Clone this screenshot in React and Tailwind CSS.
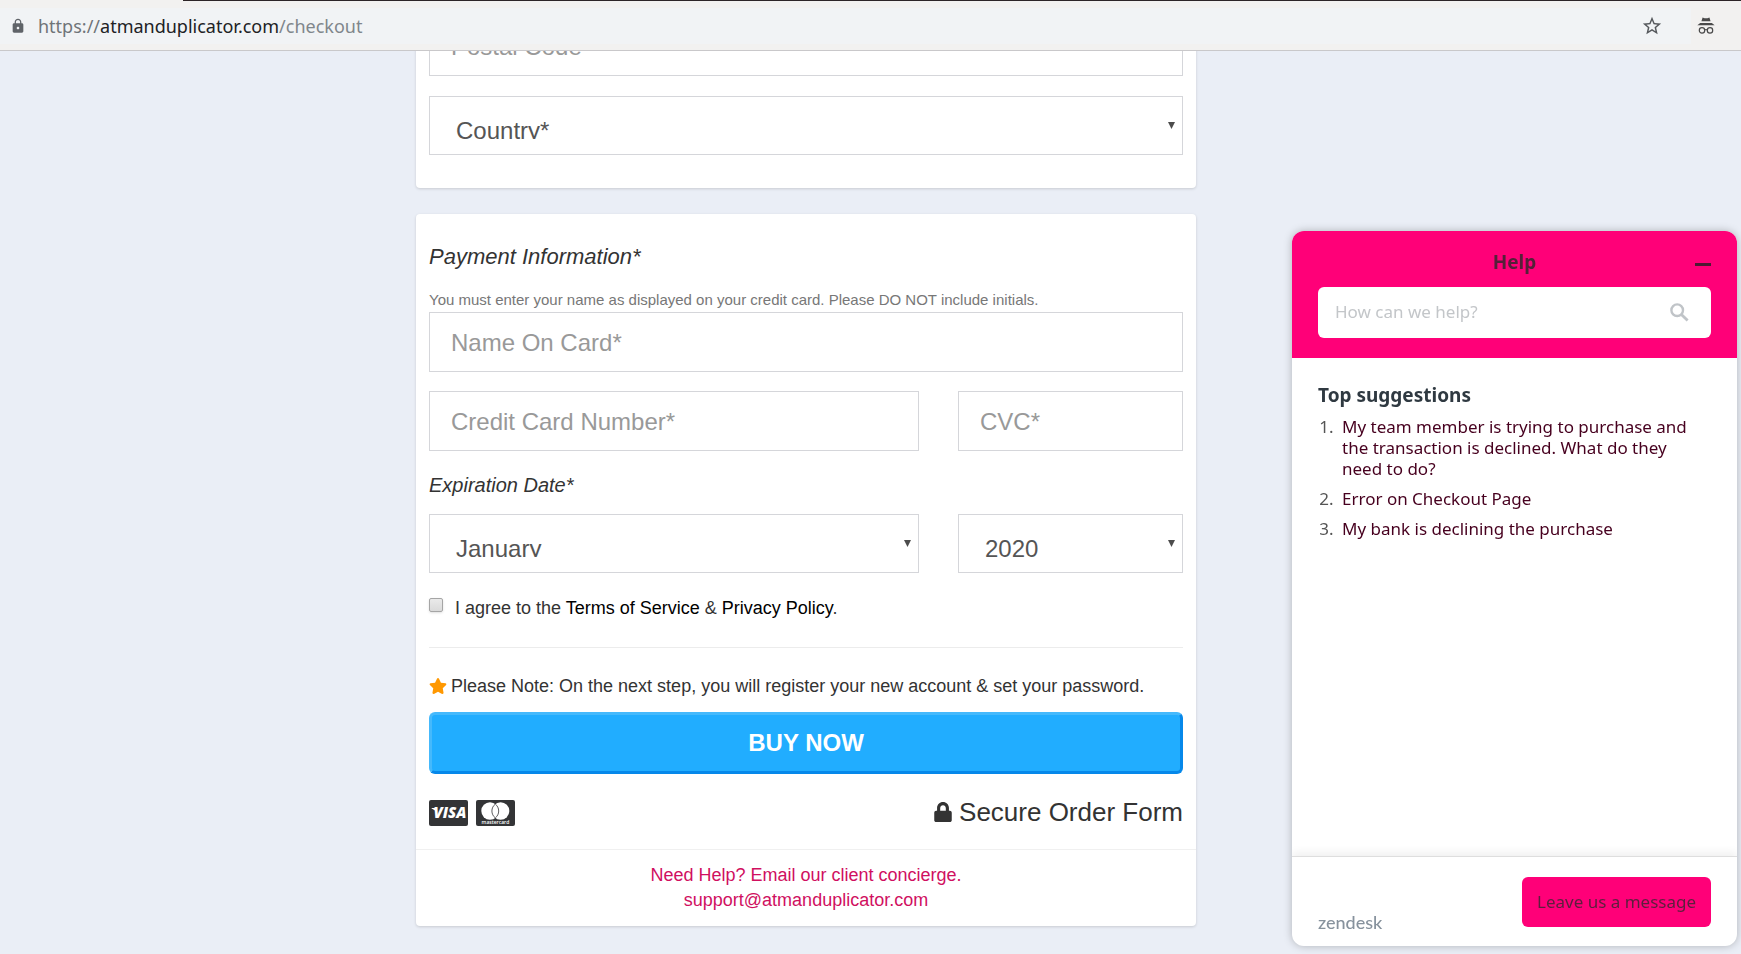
import { FaLock, FaStar } from 'react-icons/fa';
import { MdLock, MdStarBorder } from 'react-icons/md';

const suggestions = [
  'My team member is trying to purchase and the transaction is declined. What do they need to do?',
  'Error on Checkout Page',
  'My bank is declining the purchase',
];

const months = ['January', 'February', 'March', 'April', 'May', 'June', 'July', 'August', 'September', 'October', 'November', 'December'];
const years = ['2020', '2021', '2022', '2023', '2024', '2025'];

function IncognitoIcon() {
  return (
    <svg width="18" height="18" viewBox="0 0 18 18" className="text-[#4a4a4a]" aria-hidden="true">
      <path d="M5.6 0.6 L7.6 1.2 H10.4 L12.4 0.6 L13.6 4.2 H4.4 Z" fill="currentColor" />
      <path d="M3.2 6 H14.8 L17.6 8.2 H0.4 Z" fill="currentColor" />
      <circle cx="5" cy="13.4" r="2.7" fill="none" stroke="currentColor" strokeWidth="1.2" />
      <circle cx="13" cy="13.4" r="2.7" fill="none" stroke="currentColor" strokeWidth="1.2" />
      <path d="M7.6 13 Q9 12 10.4 13" fill="none" stroke="currentColor" strokeWidth="1.1" />
    </svg>
  );
}

function SearchIcon() {
  return (
    <svg width="19" height="19" viewBox="0 0 19 19" fill="none" stroke="currentColor" className="mr-0.5 text-[#c0c4c8]" aria-hidden="true">
      <circle cx="7.2" cy="7.2" r="5.8" strokeWidth="2.4" />
      <path d="M11.4 11.4 L17.6 17.6" strokeWidth="2.8" />
    </svg>
  );
}

function VisaIcon() {
  return (
    <svg width="39" height="26" viewBox="0 0 39 26" role="img" aria-label="Visa">
      <rect width="39" height="26" rx="2" fill="#333436" />
      <path d="M2.6 8 H6.8 L8 13 Q6 9.6 2.6 8.4 Z" fill="#fff" />
      <text x="4.5" y="18.4" fill="#fff" fontFamily="Open Sans, sans-serif" fontSize="15" fontWeight="800" fontStyle="italic">
        VISA
      </text>
    </svg>
  );
}

function MastercardIcon() {
  return (
    <svg width="39" height="26" viewBox="0 0 39 26" role="img" aria-label="Mastercard">
      <rect width="39" height="26" rx="2" fill="#333436" />
      <circle cx="14" cy="11" r="8.7" fill="#fff" />
      <circle cx="24.6" cy="11" r="8.7" fill="#fff" />
      <path d="M19.3 4.1 A8.7 8.7 0 0 1 19.3 17.9 A8.7 8.7 0 0 1 19.3 4.1 Z" fill="#fff" stroke="#333436" strokeWidth="0.8" />
      <text x="19.5" y="23.8" fill="#fff" textAnchor="middle" fontFamily="Open Sans, sans-serif" fontSize="5" fontWeight="600">
        mastercard
      </text>
    </svg>
  );
}

function TextField({ label }) {
  return (
    <input
      type="text"
      aria-label={label}
      placeholder={label}
      className="block h-15 w-full min-w-0 border border-[#d5d6da] bg-white px-[21px] pt-0.5 text-2xl text-[#555] placeholder:text-[#999] placeholder:opacity-100"
    />
  );
}

function SelectField({ label, options }) {
  return (
    <div className="relative min-w-0">
      <select
        aria-label={label}
        className="block h-[59px] w-full appearance-none border border-[#d5d6da] bg-white pt-5 pr-8 pb-[15px] pl-[26px] text-2xl leading-7 text-[#555]"
      >
        {options.map((option) => (
          <option key={option}>{option}</option>
        ))}
      </select>
      <svg width="7" height="7" viewBox="0 0 7 7" className="pointer-events-none absolute top-[26px] right-2 text-[#4c4c4c]" aria-hidden="true">
        <path d="M0 0 H7 L3.5 7 Z" fill="currentColor" />
      </svg>
    </div>
  );
}

function AddressBar() {
  return (
    <header className="relative z-10 flex h-[51px] items-center border-b border-[#c9c8ca] bg-[#f2f1f0] pt-0.5">
      <div className="absolute top-0 right-0 left-[183px] h-px bg-[#2c2427]" />
      <div className="flex h-9 flex-1 items-center bg-[#f1f3f5] pr-7 pl-2.5">
        <MdLock className="mr-3 size-4 text-[#5f6368]" />
        <div className="flex-1 font-['Noto_Sans',sans-serif] text-lg text-[#6f7478]">
          https://<span className="text-[#202124]">atmanduplicator.com</span>
          <span className="text-[#80868b]">/checkout</span>
        </div>
        <button type="button" aria-label="Bookmark this page">
          <MdStarBorder className="size-[22px] text-[#55585c]" />
        </button>
      </div>
      <div className="pr-[26px] pl-1.5">
        <IncognitoIcon />
      </div>
    </header>
  );
}

function PaymentForm() {
  return (
    <form className="rounded bg-white pt-[31px] shadow-[0_1px_3px_rgba(0,0,0,0.15)]">
      <div className="px-[13px]">
        <h2 className="text-[22px] leading-6 text-[#333] italic">Payment Information*</h2>
        <p className="mt-[19px] text-[15px] leading-6 text-[#777]">
          You must enter your name as displayed on your credit card. Please DO NOT include initials.
        </p>
        <TextField label="Name On Card*" />
        <div className="mt-[19px] grid grid-cols-[490fr_225fr] gap-[39px]">
          <TextField label="Credit Card Number*" />
          <TextField label="CVC*" />
        </div>
        <h3 className="mt-[22px] text-[20px] leading-6 text-[#333] italic">Expiration Date*</h3>
        <div className="mt-[17px] grid grid-cols-[490fr_225fr] gap-[39px]">
          <SelectField label="Expiration month" options={months} />
          <SelectField label="Expiration year" options={years} />
        </div>
        <div className="mt-[23px] flex items-start text-lg leading-6 text-[#333]">
          <input
            id="agree"
            type="checkbox"
            className="mt-0.5 mr-3 size-3.5 appearance-none rounded-xs border border-[#a5a5a5] bg-linear-to-b from-[#eaeaea] to-[#dadada] shadow-sm"
          />
          <label htmlFor="agree">
            I agree to the <a href="#terms" className="text-black">Terms of Service</a> &amp;{' '}
            <a href="#privacy" className="text-black">Privacy Policy</a>.
          </label>
        </div>
        <hr className="mt-[27px] border-[#ececec]" />
        <p className="mt-[26px] flex items-center gap-1 text-lg leading-6 text-[#333]">
          <FaStar className="size-[18px] text-[#ff9800]" />
          Please Note: On the next step, you will register your new account &amp; set your password.
        </p>
        <button
          type="submit"
          className="mt-3.5 block h-[62px] w-full rounded-md border-3 border-t-[#45b9fc] border-r-[#0688ea] border-b-[#0688ea] border-l-[#45b9fc] bg-[#21adff] text-2xl font-bold text-white"
        >
          BUY NOW
        </button>
        <div className="mt-[26px] flex h-[26px] items-center justify-between text-[#333]">
          <div className="flex gap-2">
            <VisaIcon />
            <MastercardIcon />
          </div>
          <div className="flex items-center gap-1.5 pb-0.5 text-[26px]">
            <FaLock className="size-5" />
            Secure Order Form
          </div>
        </div>
      </div>
      <div className="mt-[23px] border-t border-[#f0f0f0] py-[13px] text-center text-lg leading-[25px] text-[#d0105f]">
        <p>Need Help? Email our client concierge.</p>
        <a href="mailto:support@atmanduplicator.com">support@atmanduplicator.com</a>
      </div>
    </form>
  );
}

function HelpWidget() {
  return (
    <aside className="fixed right-1 bottom-2 flex h-[715px] w-[445px] flex-col overflow-hidden rounded-xl bg-white font-['Noto_Sans',sans-serif] text-[17px] shadow-[0_0_8px_rgba(0,0,0,0.25)]">
      <div className="bg-[#ff0078] px-[26px] pt-[19px] pb-5">
        <div className="relative flex h-6 items-center justify-center">
          <h2 className="text-[19px] font-bold text-[#542039]">Help</h2>
          <button type="button" aria-label="Minimize" className="absolute right-0 flex h-6 w-4 items-center pt-1">
            <span className="h-[3px] w-full bg-[#4c1a33]" />
          </button>
        </div>
        <div className="mt-[13px] flex h-[51px] items-center rounded-md bg-white pr-5 pl-[17px]">
          <input
            type="search"
            aria-label="How can we help?"
            placeholder="How can we help?"
            className="min-w-0 flex-1 pb-0.5 placeholder:text-[#c3c6c9] placeholder:opacity-100"
          />
          <SearchIcon />
        </div>
      </div>
      <div className="flex-1 px-[26px] pt-[25px]">
        <h3 className="text-[19px] leading-6 font-bold text-[#2f3941]">Top suggestions</h3>
        <ol className="mt-[9px] list-decimal space-y-[9px] pl-5 leading-[21px] marker:text-[#555]">
          {suggestions.map((text) => (
            <li key={text} className="pl-1">
              <a href="#article" className="text-[#47001f]">{text}</a>
            </li>
          ))}
        </ol>
      </div>
      <div className="flex h-[90px] items-start justify-between border-t border-[#dedede] px-[26px] pt-5 shadow-[0_-4px_8px_rgba(0,0,0,0.06)]">
        <a href="#zendesk" className="mt-[33px] font-['Lato',sans-serif] text-lg leading-6 font-medium text-[#87929d]">zendesk</a>
        <button type="button" className="h-[50px] w-[189px] rounded-md bg-[#ff0078] text-[#5c1f3d]">
          Leave us a message
        </button>
      </div>
    </aside>
  );
}

export default function App() {
  return (
    <div className="min-h-screen bg-[#eaeef6] font-['Liberation_Sans',Arial,sans-serif]">
      <AddressBar />
      <main className="pr-[129px] pb-7">
        <div className="mx-auto max-w-[780px]">
          {/* address card, scrolled partly under the toolbar */}
          <section className="-mt-12 mb-[26px] rounded bg-white px-[13px] pt-[13px] pb-[33px] shadow-[0_1px_3px_rgba(0,0,0,0.15)]">
            <TextField label="Postal Code" />
            <div className="mt-5">
              <SelectField label="Country" options={['Country*']} />
            </div>
          </section>
          <PaymentForm />
        </div>
      </main>
      <HelpWidget />
    </div>
  );
}
